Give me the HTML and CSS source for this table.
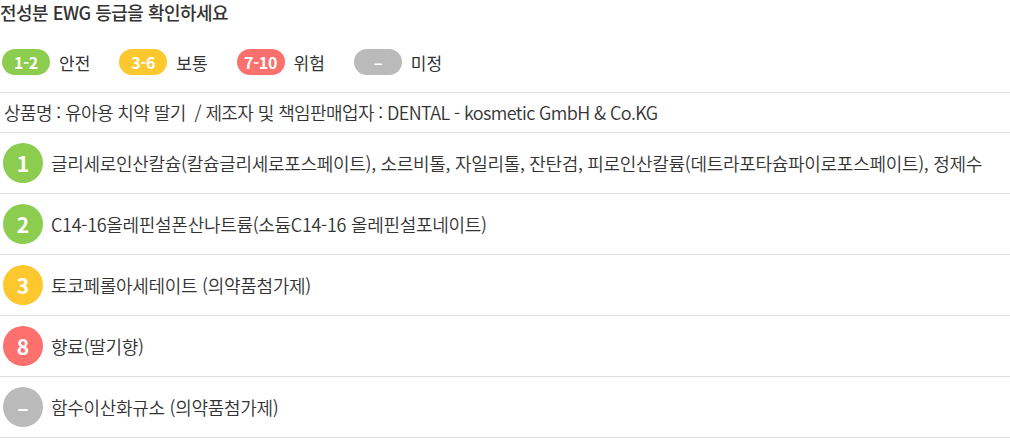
FILE: index.html
```html
<!DOCTYPE html>
<html lang="ko">
<head>
    <meta charset="UTF-8">
    <meta name="viewport" content="width=device-width, initial-scale=1.0">
    <title>전성분 EWG 등급</title>
    <link rel="stylesheet" href="styles.css">
</head>
<body>
    <h1 class="title">전성분 EWG 등급을 확인하세요</h1>

    <ul class="legend">
        <li><span class="pill green">1-2</span>안전</li>
        <li><span class="pill yellow">3-6</span>보통</li>
        <li><span class="pill red">7-10</span>위험</li>
        <li><span class="pill gray">–</span>미정</li>
    </ul>

    <div class="product">상품명 : 유아용 치약 딸기 &nbsp;/ 제조자 및 책임판매업자 : DENTAL - kosmetic GmbH &amp; Co.KG</div>

    <ul class="ingredients">
        <li><span class="grade green">1</span>글리세로인산칼슘(칼슘글리세로포스페이트), 소르비톨, 자일리톨, 잔탄검, 피로인산칼륨(데트라포타슘파이로포스페이트), 정제수</li>
        <li><span class="grade green">2</span>C14-16올레핀설폰산나트륨(소듐C14-16 올레핀설포네이트)</li>
        <li><span class="grade yellow">3</span>토코페롤아세테이트 (의약품첨가제)</li>
        <li><span class="grade red">8</span>향료(딸기향)</li>
        <li><span class="grade gray">–</span>함수이산화규소 (의약품첨가제)</li>
    </ul>
</body>
</html>
```

FILE: styles.css
```css
body {
    margin: 0;
    font-family: "Noto Sans CJK KR", "Noto Sans", sans-serif;
    font-size: 17px;
    color: #333;
    background: #fff;
}
ul {
    list-style: none;
    margin: 0;
    padding: 0;
}
.title {
    margin: 0;
    padding: 0;
    font-size: 18px;
    font-weight: 500;
    line-height: 24px;
    letter-spacing: -0.5px;
}
.legend {
    display: flex;
    align-items: center;
    padding: 25px 0 17px 2px;
}
.legend li {
    display: flex;
    align-items: center;
    margin-right: 29px;
}
.pill {
    display: inline-block;
    width: 48px;
    height: 26px;
    line-height: 26px;
    border-radius: 13px;
    margin-right: 9px;
    text-align: center;
    color: #fff;
    font-weight: 700;
    font-size: 16px;
    letter-spacing: -0.3px;
}
.green { background-color: #8ccd4f; }
.yellow { background-color: #fdc82e; }
.red { background-color: #fc706e; }
.gray { background-color: #bababa; }
.product {
    border-top: 1px solid #ddd;
    border-bottom: 1px solid #ddd;
    height: 39px;
    line-height: 39px;
    padding-left: 4px;
    font-size: 18px;
    font-weight: 350;
    letter-spacing: -0.6px;
}
.ingredients li {
    display: flex;
    align-items: center;
    height: 60px;
    border-bottom: 1px solid #ddd;
    padding-left: 3px;
    font-size: 18px;
    font-weight: 350;
    letter-spacing: -0.3px;
}
.grade {
    flex: none;
    width: 40px;
    height: 40px;
    line-height: 40px;
    border-radius: 50%;
    margin-right: 8px;
    text-align: center;
    color: #fff;
    font-weight: 700;
    font-size: 21px;
    letter-spacing: 0;
}
```
